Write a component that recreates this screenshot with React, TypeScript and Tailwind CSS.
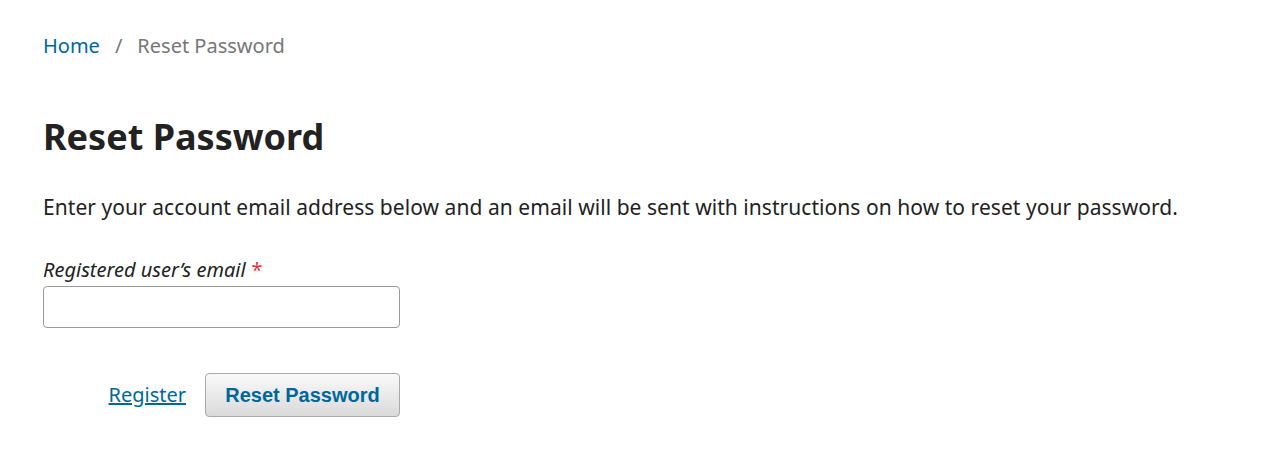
import React from 'react';

export default function App() {
    return (
        <div className="min-h-[454px] bg-white px-[43px] pt-[32px] font-['Noto_Sans',sans-serif] text-[#222]">
            <nav className="flex items-center text-[20px] leading-[28px]">
                <a href="#" className="text-[#006798]">Home</a>
                <span className="mx-[15px] text-[#777]">/</span>
                <span className="text-[#777]">Reset Password</span>
            </nav>

            <h1 className="mt-[55px] text-[36px] font-bold leading-[44px] text-[#222]">Reset Password</h1>

            <p className="mt-[33px] text-[21px] leading-[30px] tracking-[0.05px]">
                Enter your account email address below and an email will be sent with instructions on how to reset your password.
            </p>

            <form className="mt-[34px] w-[357px]">
                <label className="block text-[20px] italic leading-[28px]">
                    Registered user’s email
                    <span className="ml-[6px] not-italic text-[#e5333a]">*</span>
                </label>
                <input
                    type="email"
                    className="mt-[2px] block h-[42px] w-[357px] rounded-[4px] border border-[#999] bg-white px-2"
                />

                <div className="mt-[45px] flex items-center justify-end gap-[19px]">
                    <a href="#" className="text-[20px] text-[#006798] underline">Register</a>
                    <button
                        type="button"
                        className="h-[44px] w-[195px] rounded-[4px] border border-[#aaa] bg-gradient-to-b from-[#fafafa] to-[#dadada] font-['Liberation_Sans',sans-serif] text-[20px] font-bold text-[#006798]"
                    >
                        Reset Password
                    </button>
                </div>
            </form>
        </div>
    );
}
